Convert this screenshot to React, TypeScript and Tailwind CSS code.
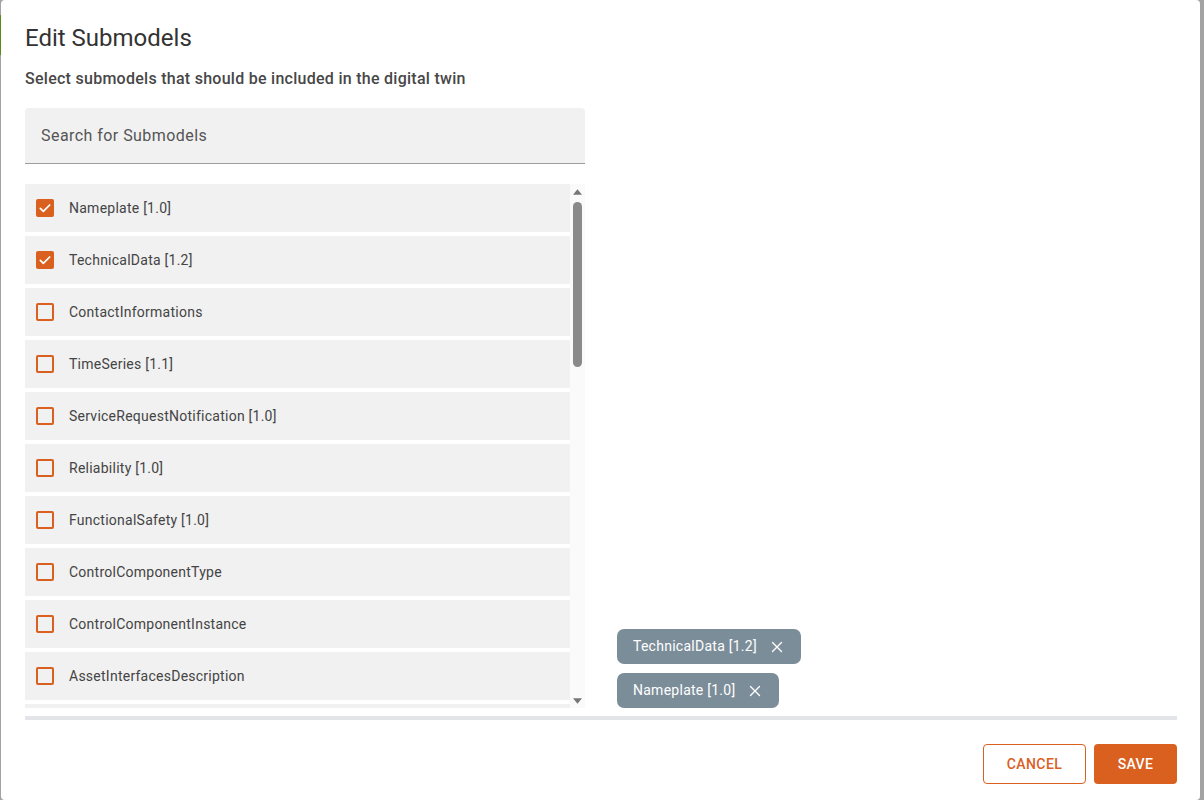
import React, { useState } from 'react';

const items = [
  'Nameplate [1.0]',
  'TechnicalData [1.2]',
  'ContactInformations',
  'TimeSeries [1.1]',
  'ServiceRequestNotification [1.0]',
  'Reliability [1.0]',
  'FunctionalSafety [1.0]',
  'ControlComponentType',
  'ControlComponentInstance',
  'AssetInterfacesDescription',
];

const CheckBox: React.FC<{ checked: boolean }> = ({ checked }) =>
  checked ? (
    <span className="flex h-[18px] w-[18px] items-center justify-center rounded-[2px] bg-[#d9601f]">
      <svg viewBox="0 0 24 24" className="h-[16px] w-[16px]" fill="none" stroke="white" strokeWidth="2.6" strokeLinecap="round" strokeLinejoin="round">
        <path d="M5 12.5l4.5 4.5L19 7.5" />
      </svg>
    </span>
  ) : (
    <span className="block h-[18px] w-[18px] rounded-[2px] border-2 border-[#d9601f]" />
  );

const CloseIcon = () => (
  <svg viewBox="0 0 24 24" className="h-[18px] w-[18px]" fill="none" stroke="white" strokeWidth="1.8" strokeLinecap="round">
    <path d="M6 6l12 12M18 6L6 18" />
  </svg>
);

export default function App() {
  const [selected, setSelected] = useState<string[]>(['TechnicalData [1.2]', 'Nameplate [1.0]']);

  const toggle = (name: string) =>
    setSelected((s) => (s.includes(name) ? s.filter((x) => x !== name) : [name, ...s]));

  return (
    <div className="relative flex h-[800px] w-[1204px] bg-[#a3a3a3] pl-[1px] font-['Roboto',sans-serif]">
      <div className="absolute left-0 top-[15px] h-[40px] w-[1px] bg-[#5a8a1a]" />
      <div className="flex h-[800px] w-[1199px] flex-col rounded-[4px] bg-white pl-[24px] pr-[23px]">
        <h2 className="mt-[22px] text-[24px] leading-[32px] font-normal text-[#333]">Edit Submodels</h2>
        <p className="mt-[13px] text-[16px] leading-[24px] font-medium tracking-[0.27px] text-[#474747]">
          Select submodels that should be included in the digital twin
        </p>

        <div className="mt-[17px] flex">
          <div className="w-[560px]">
            <div className="flex h-[56px] items-center rounded-t-[4px] border-b border-[#9e9e9e] bg-[#f1f1f1] px-[16px]">
              <input
                placeholder="Search for Submodels"
                className="w-full bg-transparent text-[16px] tracking-[0.45px] text-[#333] outline-none placeholder:text-[#555]"
              />
            </div>

            <div className="mt-[20px] flex h-[524px] overflow-hidden">
              <div className="w-[545px]">
                {items.map((name) => (
                  <div
                    key={name}
                    onClick={() => toggle(name)}
                    className="mb-[4px] flex h-[48px] cursor-pointer items-center bg-[#f1f1f1] pl-[11px]"
                  >
                    <CheckBox checked={selected.includes(name)} />
                    <span className="ml-[15px] text-[14px] tracking-[0.25px] text-[#444]">{name}</span>
                  </div>
                ))}
                <div className="h-[48px] bg-[#f1f1f1]" />
              </div>
              <div className="flex w-[15px] flex-col items-center bg-[#fafafa]">
                <svg viewBox="0 0 10 6" className="mt-[5px] h-[6px] w-[9px]">
                  <path d="M5 0L10 6H0z" fill="#777" />
                </svg>
                <div className="mt-[7px] h-[165px] w-[9px] rounded-full bg-[#8a8a8a]" />
                <div className="flex-1" />
                <svg viewBox="0 0 10 6" className="mb-[4px] h-[6px] w-[9px]">
                  <path d="M0 0H10L5 6z" fill="#777" />
                </svg>
              </div>
            </div>
          </div>

          <div className="flex flex-1 flex-col items-start justify-end gap-[9px] pl-[32px]">
            {selected.map((name) => (
              <span
                key={name}
                className="flex h-[35px] items-center gap-[11px] rounded-[7px] bg-[#7b8d99] pl-[16px] pr-[15px] text-[14px] tracking-[0.26px] text-white"
              >
                {name}
                <button onClick={() => toggle(name)} className="flex items-center">
                  <CloseIcon />
                </button>
              </span>
            ))}
          </div>
        </div>

        <div className="mt-[8px] h-[4px] bg-[#e4e5e9]" />

        <div className="mt-[24px] flex justify-end gap-[8px]">
          <button className="h-[40px] w-[103px] rounded-[4px] border border-[#d9601f] bg-white text-[14px] font-medium tracking-[0.4px] text-[#d9601f]">
            CANCEL
          </button>
          <button className="h-[40px] w-[83px] rounded-[4px] bg-[#d9601f] text-[14px] font-medium tracking-[0.4px] text-white">
            SAVE
          </button>
        </div>
      </div>
    </div>
  );
}
